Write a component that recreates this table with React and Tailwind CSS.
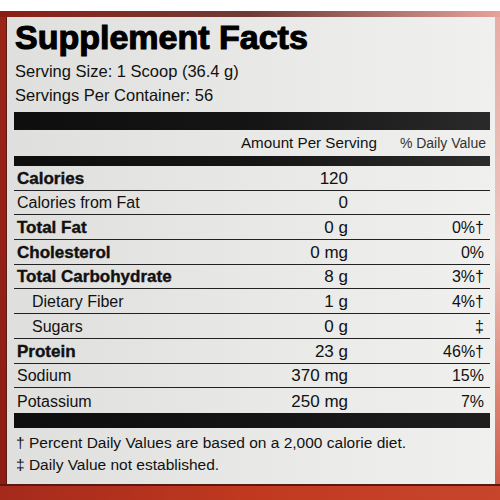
import React from "react";

const rows = [
  { name: "Calories", amt: "120", dv: "", bold: true },
  { name: "Calories from Fat", amt: "0", dv: "" },
  { name: "Total Fat", amt: "0 g", dv: "0%†", bold: true },
  { name: "Cholesterol", amt: "0 mg", dv: "0%", bold: true },
  { name: "Total Carbohydrate", amt: "8 g", dv: "3%†", bold: true },
  { name: "Dietary Fiber", amt: "1 g", dv: "4%†", indent: true },
  { name: "Sugars", amt: "0 g", dv: "‡", indent: true },
  { name: "Protein", amt: "23 g", dv: "46%†", bold: true },
  { name: "Sodium", amt: "370 mg", dv: "15%" },
  { name: "Potassium", amt: "250 mg", dv: "7%" },
];

export default function App() {
  return (
    <div
      className="w-[500px] h-[500px] bg-white flex flex-col overflow-hidden text-[#111]"
      style={{ fontFamily: '"Liberation Sans", Arial, sans-serif' }}
    >
      <div className="h-[11px] shrink-0 bg-white" />
      <div className="h-[6px] shrink-0 bg-linear-to-r from-[#8c1c13] via-[#6e3a35] to-[#e6a39c]" />
      <div className="flex-1 flex min-h-0">
        <div className="w-[6px] bg-linear-to-b from-[#9a2418] to-[#8e1d14]" />
        <div className="flex-1 flex flex-col bg-linear-to-r from-[#dfdfdd] via-[#e8e8e6] to-[#f0f0ee] pl-[7px] pr-[5px] border-l border-[#5a1a14]">
          <div className="pt-[1px] pl-[1px] text-[34px] leading-[38px] font-bold [-webkit-text-stroke:1.1px_#000] text-black">
            Supplement Facts
          </div>
          <div className="mt-[3px] pl-[1px] text-[16.5px] leading-[24px]">
            Serving Size: 1 Scoop (36.4 g)
          </div>
          <div className="pl-[1px] text-[16.5px] leading-[24px]">
            Servings Per Container: 56
          </div>
          <div className="mt-[5px] h-[18px] bg-linear-to-r from-[#0e0e0e] via-[#151515] to-[#2a2a2a]" />
          <div className="h-[26px] flex items-center justify-end gap-[23px] pr-[4px]">
            <span className="text-[15.2px]">Amount Per Serving</span>
            <span className="text-[14px] text-[#333]">% Daily Value</span>
          </div>
          <div className="h-[10px] bg-linear-to-r from-[#0e0e0e] via-[#151515] to-[#2c2c2c]" />
          <div className="flex flex-col">
            {rows.map((r, i) => (
              <div
                key={r.name}
                className={
                  "h-[24.7px] flex items-end pb-px leading-[20px] " +
                  (i < rows.length - 1 ? "border-b border-[#222]" : "")
                }
              >
                <div
                  className={
                    "flex-1 " +
                    (r.indent ? "pl-[18px] " : "pl-[3px] ") +
                    (r.bold
                      ? "text-[17px] font-bold [-webkit-text-stroke:0.4px_#111]"
                      : "text-[16px]")
                  }
                >
                  {r.name}
                </div>
                <div className="text-[17px] text-right">{r.amt}</div>
                <div className="w-[142px] pr-[6px] text-right text-[16px]">{r.dv}</div>
              </div>
            ))}
          </div>
          <div className="h-[15px] bg-linear-to-r from-[#0e0e0e] via-[#141414] to-[#1e1e1e]" />
          <div className="pt-[4px] pl-[2px] text-[15.5px] leading-[22px]">
            <div>† Percent Daily Values are based on a 2,000 calorie diet.</div>
            <div>‡ Daily Value not established.</div>
          </div>
        </div>
        <div className="w-[5px] bg-linear-to-b from-[#e9aca5] via-[#eec4bf] to-[#cf5a48]" />
      </div>
      <div className="h-[16px] shrink-0 flex flex-col">
        <div className="h-[2px] bg-[#5a1a12]" />
        <div className="flex-1 bg-linear-to-r from-[#a52a1c] via-[#c0391f] to-[#c8452c]" />
      </div>
    </div>
  );
}
